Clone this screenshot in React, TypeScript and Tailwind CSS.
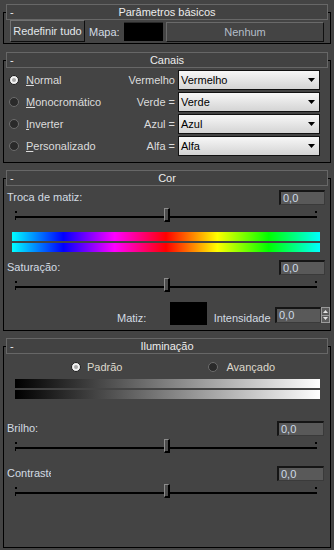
import React from "react";

const label = "text-[11px] leading-[13px] text-[#d3dbe3]";

function Header({ title }: { title: string }) {
  return (
    <div className="-mt-[9px] mx-[2px] grid h-[16px] grid-cols-[1fr_auto_1fr] items-center border border-[#676767] bg-[#424242] text-[11px] leading-[13px] text-[#ececec]">
      <span className="pl-[3px]">-</span>
      <span>{title}</span>
      <span />
    </div>
  );
}

function ValueBox({ value, className = "" }: { value: string; className?: string }) {
  return (
    <div
      className={`flex h-[15px] w-[46px] items-center border-t-2 border-l-2 border-[#151515] border-r border-b border-r-[#3a3a3a] border-b-[#3a3a3a] bg-[#595959] pl-[2px] text-[11px] leading-[13px] text-[#cfdbe8] ${className}`}
    >
      {value}
    </div>
  );
}

function Slider() {
  return (
    <div className="relative ml-[11px] mr-[13px] h-[18px]">
      <div className="absolute left-0 top-[6px] h-[2px] w-[2px] bg-black" />
      <div className="absolute right-0 top-[6px] h-[2px] w-[2px] bg-black" />
      <div className="absolute left-0 right-0 top-[11px] h-[4px] border-t-2 border-l border-black" />
      <div className="absolute left-[149px] top-[3px] h-[14px] w-[6px] border-t border-l border-[#8c8c8c] border-r-2 border-b-2 border-r-black border-b-black bg-[#4c4c4c]" />
    </div>
  );
}

function Radio({ checked }: { checked?: boolean }) {
  return checked ? (
    <span className="flex h-[10px] w-[10px] shrink-0 items-center justify-center rounded-full border border-[#1c1c1c] bg-[#f2f2f2]">
      <span className="h-[4px] w-[4px] rounded-full bg-[#a8a8a8]" />
    </span>
  ) : (
    <span className="h-[10px] w-[10px] shrink-0 rounded-full border border-[#6c6c6c] bg-[#2a2a2a]" />
  );
}

function Dropdown({ value }: { value: string }) {
  return (
    <div className="ml-[3px] mr-[10px] flex h-[20px] w-[142px] items-center justify-between border border-[#111] bg-[linear-gradient(to_bottom,#f7f7f7,#d4d4d4)] pl-[2px] pr-[4px] text-[11px] leading-[13px] text-black">
      <span>{value}</span>
      <svg width="7" height="4" viewBox="0 0 7 4">
        <path d="M0 0h7L3.5 4z" fill="#000" />
      </svg>
    </div>
  );
}

const channels = [
  { key: "N", rest: "ormal", name: "Vermelho", value: "Vermelho", checked: true },
  { key: "M", rest: "onocromático", name: "Verde =", value: "Verde" },
  { key: "I", rest: "nverter", name: "Azul =", value: "Azul" },
  { key: "P", rest: "ersonalizado", name: "Alfa =", value: "Alfa" },
];

export default function App() {
  return (
    <div className="h-[550px] w-[334px] overflow-hidden bg-[#444444] pt-[12px] font-['Liberation_Sans',Arial,sans-serif]">
      {/* Parâmetros básicos */}
      <section className="mx-[3px] border border-black pb-[1px]">
        <Header title="Parâmetros básicos" />
        <div className="flex items-start pl-[6px]">
          <button className="h-[22px] w-[75px] border-t border-l border-[#727272] border-r border-b border-r-[#0e0e0e] border-b-[#0e0e0e] bg-[#464646] text-[11px] leading-[13px] text-[#e2e6ea]">
            Redefinir tudo
          </button>
          <span className={`ml-[4px] mt-[6px] w-[35px] ${label}`}>Mapa:</span>
          <div className="mt-[2px] h-[19px] w-[39px] border-t border-[#2a2a2a] bg-black" />
          <button className="ml-[3px] mt-[2px] h-[20px] w-[158px] border-t border-l border-[#6a6a6a] border-r border-b border-r-[#101010] border-b-[#101010] bg-[#444] text-[11px] leading-[13px] text-[#b4bec8]">
            Nenhum
          </button>
        </div>
      </section>

      {/* Canais */}
      <section className="mx-[3px] mt-[16px] border border-black pb-[5px]">
        <Header title="Canais" />
        <div className="mt-[1px]">
          {channels.map((c) => (
            <div key={c.value} className="flex h-[22px] items-center">
              <div className="flex flex-1 items-center gap-[7px] pl-[5px]">
                <Radio checked={c.checked} />
                <span className="text-[11px] leading-[13px] text-[#dcdcdc]">
                  <span className="underline">{c.key}</span>
                  {c.rest}
                </span>
              </div>
              <span className="text-right text-[11px] leading-[13px] text-[#dcdcdc]">{c.name}</span>
              <Dropdown value={c.value} />
            </div>
          ))}
        </div>
      </section>

      {/* Cor */}
      <section className="mx-[3px] mt-[15px] border border-black pb-[5px]">
        <Header title="Cor" />
        <div className="mt-[4px] flex items-center justify-between pl-[3px] pr-[5px]">
          <span className={label}>Troca de matiz:</span>
          <ValueBox value="0,0" />
        </div>
        <Slider />
        <div className="ml-[8px] mr-[10px] mt-[9px] flex flex-col gap-[2px]">
          <div className="h-[9px] bg-[linear-gradient(to_right,#00ffff,#0000ff,#ff00ff,#ff0000,#ffff00,#00ff00,#00ffff)]" />
          <div className="h-[9px] bg-[linear-gradient(to_right,#00ffff,#0000ff,#ff00ff,#ff0000,#ffff00,#00ff00,#00ffff)]" />
        </div>
        <div className="mt-[8px] flex items-center justify-between pl-[3px] pr-[5px]">
          <span className={label}>Saturação:</span>
          <ValueBox value="0,0" />
        </div>
        <Slider />
        <div className="mt-[9px] flex items-end pl-[113px]">
          <span className={`w-[54px] ${label}`}>Matiz:</span>
          <div className="h-[23px] w-[38px] bg-black" />
          <span className={`ml-[7px] w-[63px] ${label}`}>Intensidade</span>
          <div className="mb-[2px] flex h-[16px]">
            <ValueBox value="0,0" className="h-[16px] w-[37px]" />
            <div className="flex w-[9px] flex-col border border-[#9a9a9a] bg-[#5c5c5c]">
              <div className="flex flex-1 items-center justify-center border-b border-[#9a9a9a]">
                <svg width="5" height="3" viewBox="0 0 5 3">
                  <path d="M0 3h5L2.5 0z" fill="#e6e6e6" />
                </svg>
              </div>
              <div className="flex flex-1 items-center justify-center">
                <svg width="5" height="3" viewBox="0 0 5 3">
                  <path d="M0 0h5L2.5 3z" fill="#e6e6e6" />
                </svg>
              </div>
            </div>
          </div>
        </div>
      </section>

      {/* Iluminação */}
      <section className="mx-[3px] mt-[15px] border border-black pb-[48px]">
        <Header title="Iluminação" />
        <div className="mt-[6px] flex h-[14px] items-center">
          <div className="ml-[67px] flex items-center gap-[6px]">
            <Radio checked />
            <span className="text-[11px] leading-[13px] text-[#ddd8cc]">Padrão</span>
          </div>
          <div className="ml-[86px] flex items-center gap-[8px]">
            <Radio />
            <span className="text-[11px] leading-[13px] text-[#ddd8cc]">Avançado</span>
          </div>
        </div>
        <div className="ml-[11px] mr-[10px] mt-[5px] flex flex-col gap-[2px]">
          <div className="h-[9px] bg-[linear-gradient(to_right,#000000,#ffffff)]" />
          <div className="h-[9px] bg-[linear-gradient(to_right,#000000,#ffffff)]" />
        </div>
        <div className="mt-[22px] flex items-center justify-between pl-[3px] pr-[6px]">
          <span className={label}>Brilho:</span>
          <ValueBox value="0,0" className="w-[47px]" />
        </div>
        <Slider />
        <div className="mt-[12px] flex items-center justify-between pl-[3px] pr-[6px]">
          <span className={`w-[44px] overflow-hidden whitespace-nowrap ${label}`}>Contraste</span>
          <ValueBox value="0,0" className="w-[47px]" />
        </div>
        <Slider />
      </section>
    </div>
  );
}
